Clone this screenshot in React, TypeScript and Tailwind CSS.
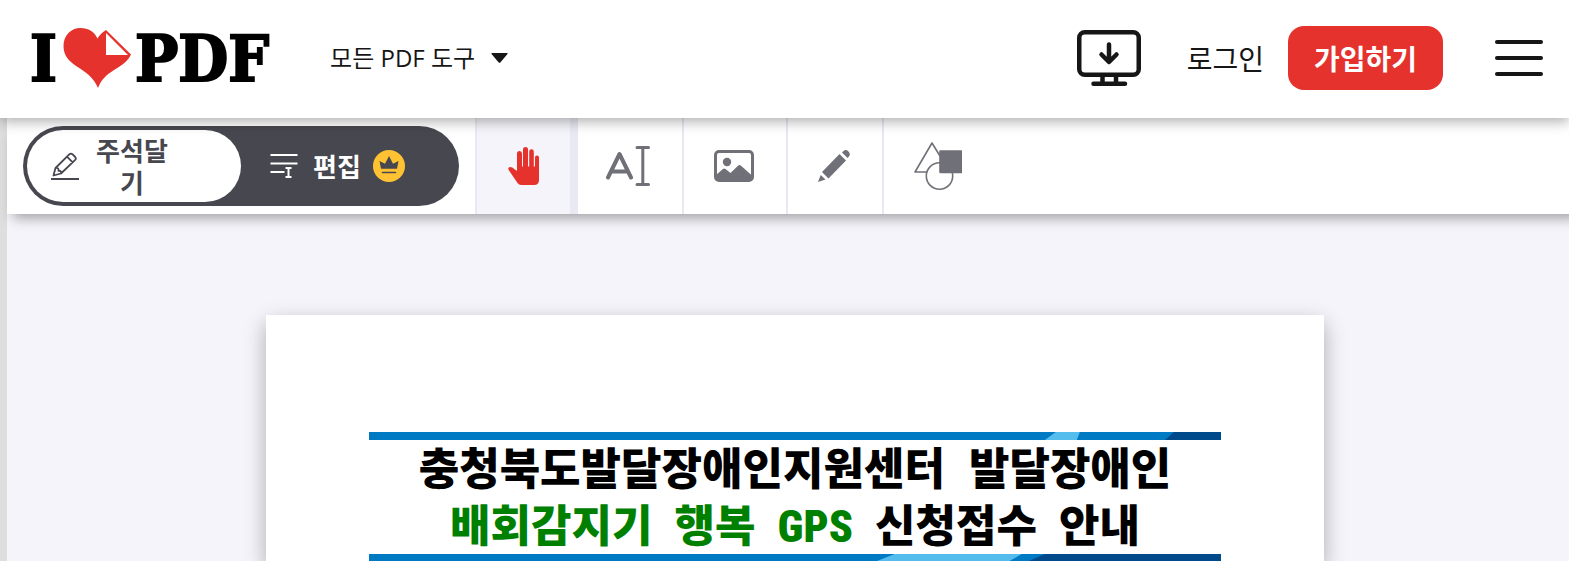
import type { ReactNode } from "react";

const Logo = () => (
  <a href="#" aria-label="I love PDF" className="flex items-center font-['DejaVu_Serif_Condensed','DejaVu_Serif',serif] text-[64px] leading-none font-bold text-black [-webkit-text-stroke:2px_#000]">
    <span className="pt-0.5">I</span>
    <svg viewBox="0 0 68 60" className="mr-1 ml-1.5 h-[60px] w-[68px]" aria-hidden="true">
      <path
        fill="#e5322d"
        d="M35 60C31 51 25 45.500 17 40.500C6 33.500 0.500 28 0.500 18C0.500 7.500 8 0 17.500 0C25.500 0 31.500 4 34.500 10.500C36.500 7 39.500 4 43 2L68 26.500C65 33 59 37.500 51 42C43 47 38 52 35 60Z"
      />
      <path fill="#fff" d="M43 5V27H65Z" />
    </svg>
    <span className="pt-0.5">PDF</span>
  </a>
);

const DesktopIcon = () => (
  <svg viewBox="0 0 64 56" className="h-14 w-16" fill="none" stroke="#161616" strokeWidth="4.500" strokeLinecap="round" strokeLinejoin="round">
    <rect x="2.250" y="2.250" width="59.500" height="42.500" rx="5.500" />
    <path d="M32 14.500v17M24.500 24.500l7.500 7.500l7.500-7.500M25.500 46v7M39 46v7M16.500 53.700h31.500" />
  </svg>
);

const AnnotateIcon = () => (
  <svg viewBox="0 0 28 28" className="h-7 w-7 shrink-0" fill="none" stroke="#47474f" strokeWidth="1.800" strokeLinejoin="round">
    <path d="M2.500 23.500L4.500 16L18.500 2.200Q20 1 21.400 2.200L24.200 5Q25.400 6.400 24.200 7.800L10 21.500L2.500 23.500ZM16 4.700L21.700 10.300M4.500 16Q8 15.500 7.500 18.800Q10.800 18.500 10 21.500" />
    <path d="M0 27h28" strokeWidth="2" />
  </svg>
);

const EditIcon = () => (
  <svg viewBox="0 0 28 26" className="h-[26px] w-7 shrink-0" fill="none" stroke="#fff" strokeWidth="2">
    <path d="M0.500 2h27M0.500 10.500h27M0.500 19h14M15.500 15h6M18.500 15v9M15.500 24h6" />
  </svg>
);

const CrownBadge = () => (
  <svg viewBox="0 0 32 32" className="h-8 w-8 shrink-0">
    <circle cx="16" cy="16" r="16" fill="#ffc233" />
    <path fill="#47474f" d="M8 18.800L6.500 11L12 13.800L16 6L20 13.800L25.500 11L24 18.800Z" />
    <path stroke="#47474f" strokeWidth="1.600" strokeLinecap="round" d="M9.500 22.500h13" />
  </svg>
);

const HandIcon = () => (
  <svg viewBox="0 0 32 38" className="h-[38px] w-8" fill="#e5322d">
    <path d="M9 24V6.500a2.500 2.500 0 0 1 5 0V19.500h1V2.500a2.500 2.500 0 0 1 5 0V19.500h1.200V4.500a2.300 2.300 0 0 1 4.600 0V19.500h1.200V10.500a2 2 0 0 1 4 0V33q0 5-5 5H13q-2 0-3.500-2L1 23.500Q-0.800 20.500 2 20.100Q4.500 20.100 6.500 22.300Z" />
  </svg>
);

const TextIcon = () => (
  <svg viewBox="0 0 44 40" className="h-10 w-11" fill="none" stroke="#707078" strokeLinecap="round" strokeLinejoin="round">
    <path strokeWidth="4" d="M2 31.500L13.500 8L25 31.500M7 25.500h13" />
    <path strokeWidth="3" d="M31 1.500h11.500M31 38.500h11.500M36.800 1.500v37" />
  </svg>
);

const PictureIcon = () => (
  <svg viewBox="0 0 40 32" className="h-8 w-10">
    <rect x="1.500" y="1.500" width="37" height="29" rx="3.500" fill="none" stroke="#707078" strokeWidth="3" />
    <circle cx="13" cy="12" r="4.200" fill="#707078" />
    <path fill="#707078" d="M2 25L9 19Q10.300 18 11.500 19L16.500 23L24 15.800Q25.500 14.300 27 15.800L38 25.500V30H2Z" />
  </svg>
);

const PencilIcon = () => (
  <svg viewBox="0 0 32 32" className="h-8 w-8" fill="#707078">
    <path d="M21.500 4L28 10.500L10.500 28.500L4 22ZM24 2.500L25.500 1Q28 -1 30.500 1.500Q33 4 31 6.500L29.500 8ZM2.700 25L7.500 29.500L0 32Z" />
  </svg>
);

const ShapesIcon = () => (
  <svg viewBox="0 0 48 48" className="h-12 w-12" fill="none" stroke="#707078" strokeWidth="1.600" strokeLinejoin="round">
    <path d="M13 30H1L18 1L26 14" />
    <circle cx="25.500" cy="34" r="13.200" />
    <rect x="26" y="9" width="21.500" height="21.500" rx="0.500" fill="#707078" />
  </svg>
);

const ToolButton = ({ label, className, children }: { label: string; className: string; children: ReactNode }) => (
  <button type="button" aria-label={label} className={`flex items-center justify-center border-[#e9e9f4] ${className}`}>
    {children}
  </button>
);

const Header = () => (
  <header className="relative z-20 flex h-[118px] shrink-0 items-center bg-white pr-[26px] pb-0.5 pl-[30px] text-[#161616] shadow-[0_4px_12px_rgba(0,0,0,0.3)]">
    <Logo />
    <button type="button" className="ml-[61px] flex items-center gap-4 font-['Open_Sans','Noto_Sans_CJK_KR',sans-serif] text-2xl">
      모든 PDF 도구
      <svg viewBox="0 0 17 10" className="h-2.5 w-[17px]" fill="#161616">
        <path d="M1 0h15q1 0 0.500 1L9.500 9.300q-1 1-2 0L0.500 1Q0 0 1 0Z" />
      </svg>
    </button>
    <div className="ml-auto flex items-center">
      <a href="#" aria-label="데스크톱 앱">
        <DesktopIcon />
      </a>
      <a href="#" className="ml-[46px] text-[28px]">로그인</a>
      <a href="#" className="ml-6 flex h-16 items-center rounded-2xl bg-[#e5322d] px-[26px] text-[28px] font-bold text-white">
        가입하기
      </a>
      <button type="button" aria-label="메뉴" className="ml-[52px] flex flex-col gap-3">
        <span className="h-1 w-12 rounded-full bg-[#161616]" />
        <span className="h-1 w-12 rounded-full bg-[#161616]" />
        <span className="h-1 w-12 rounded-full bg-[#161616]" />
      </button>
    </div>
  </header>
);

const Toolbar = () => (
  <div className="relative z-10 -mr-4 flex h-24 bg-white pl-4 shadow-[0_10px_12px_-6px_rgba(0,0,0,0.35)]">
    <div className="my-2 mr-4 flex w-[436px] rounded-full bg-[#47474f] p-1 text-[26px] leading-8 font-bold">
      <button type="button" className="flex w-[214px] items-center rounded-full bg-white pl-6 text-[#47474f]">
        <AnnotateIcon />
        <span className="ml-4 w-[74px] text-center break-all">주석달기</span>
      </button>
      <button type="button" className="ml-[29px] flex items-center text-white">
        <EditIcon />
        <span className="mr-3 ml-[15px]">편집</span>
        <CrownBadge />
      </button>
    </div>
    <ToolButton label="이동" className="w-[103px] border-r-8 border-l-2 bg-[#f5f4fa]">
      <HandIcon />
    </ToolButton>
    <ToolButton label="텍스트 추가" className="w-[106px] border-r-2 pr-1">
      <TextIcon />
    </ToolButton>
    <ToolButton label="이미지 추가" className="w-[104px] border-r-2 pr-0.5">
      <PictureIcon />
    </ToolButton>
    <ToolButton label="그리기" className="w-24 border-r-2 pr-0.5">
      <PencilIcon />
    </ToolButton>
    <ToolButton label="도형 추가" className="w-[108px]">
      <ShapesIcon />
    </ToolButton>
  </div>
);

const Document = () => (
  <article className="mx-auto min-h-[246px] w-full max-w-[1058px] bg-white px-[103px] pt-[117px] shadow-[0_8px_20px_rgba(0,0,0,0.3)]">
    <svg viewBox="0 0 851 8" preserveAspectRatio="none" className="block h-2 w-full">
      <path fill="#007ac3" d="M0 0h851v8H0Z" />
      <path fill="#55bdee" d="M686 0h24l-3 8h-32Z" />
      <path fill="#004a8b" d="M804 0h47v8h-56Z" />
    </svg>
    <h1 className="h-[114px] pt-px text-center font-['Liberation_Sans','Noto_Sans_CJK_KR',sans-serif] text-[44px] leading-[57px] font-black text-black">
      <span className="flex justify-center gap-6">
        <span>충청북도발달장애인지원센터</span>
        <span>발달장애인</span>
      </span>
      <span className="flex items-baseline justify-center gap-[22px]">
        <span className="text-[#008000]">배회감지기</span>
        <span className="text-[#008000]">행복</span>
        <span className="font-['Roboto_Condensed','Roboto',sans-serif] text-[#008000]">GPS</span>
        <span>신청접수</span>
        <span>안내</span>
      </span>
    </h1>
    <svg viewBox="0 0 851 8" preserveAspectRatio="none" className="block h-2 w-full">
      <path fill="#007ac3" d="M0 0h851v8H0Z" />
      <path fill="#55bdee" d="M525 0h127l-14 8H505Z" />
      <path fill="#004a8b" d="M675 0h176v8H657Z" />
    </svg>
  </article>
);

const App = () => {
  return (
    <div className="flex h-screen flex-col overflow-hidden bg-[#f5f4fa] font-['Noto_Sans_CJK_KR',sans-serif]">
      <Header />
      <div className="flex flex-1">
        <aside className="w-[7px] shrink-0 bg-[#dedede]" />
        <main className="min-w-0 flex-1">
          <Toolbar />
          <div className="pt-[101px] pl-3.5">
            <Document />
          </div>
        </main>
      </div>
    </div>
  );
};

export default App;
